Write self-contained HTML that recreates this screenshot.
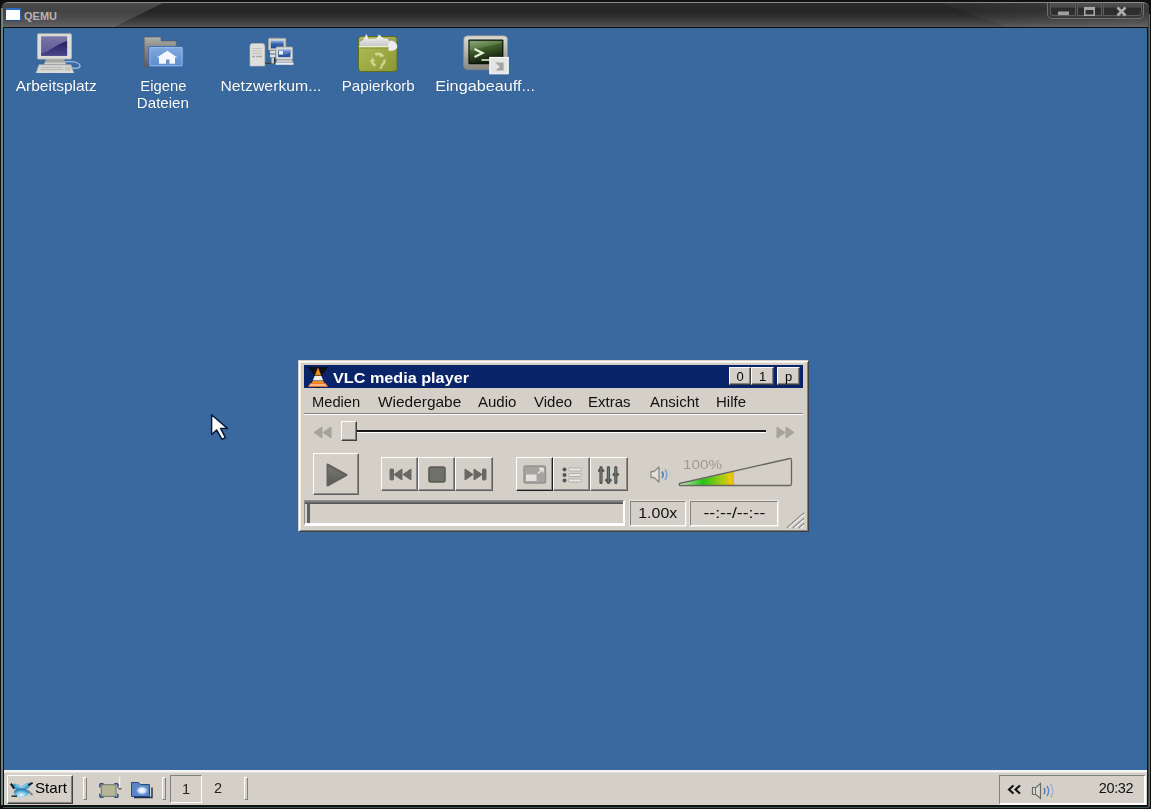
<!DOCTYPE html>
<html>
<head>
<meta charset="utf-8">
<title>QEMU</title>
<style>
*{box-sizing:border-box;margin:0;padding:0}
html,body{width:1151px;height:809px;overflow:hidden;background:#0b0b0b;font-family:"Liberation Sans",sans-serif}
#frame{position:absolute;left:0;top:0;width:1151px;height:809px;background:#101010}
#tbar{position:absolute;left:2px;top:2px;width:1147px;height:25px;border-top:1px solid #8c8c8c;border-radius:6px 6px 0 0;overflow:hidden;
 background:linear-gradient(to bottom,#2a2a2a 0%,#242424 30%,#2e2e2e 55%,#444 85%,#555 100%)}
#tshine{position:absolute;left:0;top:0;width:175px;height:24px;background:linear-gradient(to bottom,rgba(255,255,255,.16),rgba(255,255,255,.10));clip-path:polygon(0 0,92% 0,64% 100%,0 100%)}
#tshine2{position:absolute;right:0;top:0;width:260px;height:24px;background:linear-gradient(to left,rgba(255,255,255,.10),rgba(255,255,255,0));clip-path:polygon(20% 0,100% 0,100% 100%,45% 100%)}
#ticon{position:absolute;left:4px;top:5px;width:15px;height:13px;background:#fff;border-top:2px solid #2a6cc4;border-bottom:1px solid #1f4a8a;border-right:1px solid #345f9a}
#ttext{position:absolute;left:22px;top:6px;font-size:11px;font-weight:bold;color:#b4b4b4;line-height:14px}
#wbtns{position:absolute;left:1045px;top:-1px;width:97px;height:17px;border:1px solid #707070;border-top:none;border-radius:0 0 5px 5px;background:#3a3a3a}
#wbtns b{position:absolute;top:0px;height:14px;border:1px solid #5c5c5c;border-top:none;background:linear-gradient(to bottom,#505050 0%,#484848 42%,#2c2c2c 43%,#303030 100%)}
#wbtns svg{position:absolute;left:0;top:-1px}
#lline{position:absolute;left:1px;top:8px;width:2px;height:797px;background:#6f8580}
#rline{position:absolute;left:1148px;top:14px;width:2px;height:793px;background:linear-gradient(to right,#333,#6a7876)}
#bline{position:absolute;left:3px;top:807px;width:1146px;height:1px;background:#3c5654}
#desk{position:absolute;left:4px;top:28px;width:1143px;height:742px;background:#39699f}
.dico{position:absolute;top:33px;width:108px;text-align:center;color:#fff;font-size:14.5px;line-height:17px}
.dico .lbl{position:absolute;left:0;width:108px;top:44px;text-shadow:0 0 1px rgba(0,0,0,0.3)}
#task{position:absolute;left:4px;top:770px;width:1143px;height:35px;background:#d4d0c8;border-top:2px solid #f6f6f4;box-shadow:inset 0 1px 0 #e4e2dc}

.t{display:inline-block;white-space:nowrap;transform-origin:50% 50%}
.ic{position:absolute}
.lb{position:absolute;color:#fff;font-size:15px;line-height:17px;text-align:center;width:140px;white-space:nowrap;text-shadow:0 0 1px rgba(20,40,80,.55)}
.raised{border:1px solid;border-color:#fff #404040 #404040 #fff;box-shadow:inset -1px -1px 0 #808080,inset 1px 1px 0 #d4d0c8}
.sunk{border:1px solid;border-color:#808080 #fff #fff #808080}
.hdl{position:absolute;top:5px;width:4px;height:23px;border:1px solid;border-color:#fff #808080 #808080 #fff}

#vlc{position:absolute;left:298px;top:360px;width:511px;height:172px;background:#d4d0c8;border:1px solid;border-color:#d4d0c8 #404040 #404040 #d4d0c8;box-shadow:inset 1px 1px 0 #fff,inset -1px -1px 0 #808080,inset 2px 2px 0 #ecebe6}
#vlc>*{position:absolute}
#vt{left:5px;top:4px;width:499px;height:23px;background:#0a246a}
#vt .ttl{position:absolute;left:29px;top:3px;color:#fff;font-weight:bold;font-size:15px;line-height:19px}
.tb{position:absolute;top:2px;height:18px;background:#d4d0c8;border:1px solid;border-color:#fff #404040 #404040 #fff;box-shadow:inset -1px -1px 0 #808080;font-size:13px;line-height:17px;text-align:center;color:#000}
.mi{position:absolute;top:32px;font-size:15px;line-height:18px;color:#111}
.vb{position:absolute;top:96px;height:34px;border:1px solid;border-color:#fff #606060 #606060 #fff;box-shadow:inset -1px -1px 0 #8c8c88}
.vb svg{position:absolute}
.sf{position:absolute;top:139px;height:26px;border:1px solid;border-color:#8e8e8e #fff #fff #8e8e8e;border-bottom-width:3px;border-right-width:2px}
.sf::after{content:"";position:absolute;left:0;top:0;bottom:0;width:5px;background:linear-gradient(to right,#d8d6d0 0,#d8d6d0 2px,#606060 2px,#606060 100%)}
.sf::before{content:"";position:absolute;left:0;top:0;right:0;height:3px;background:linear-gradient(#8a8a8a,#4c4c4c);z-index:1}
.sf2{position:absolute;top:140px;height:25px;border:1px solid;border-color:#808080 #fff #fff #808080;box-shadow:0 0 0 1px #e6e4de;font-size:14.500px;line-height:22px;text-align:center;color:#111}
#desk .ic,#desk .lb,#vlc,#task{filter:blur(.45px)}
</style>
</head>
<body>
<div id="frame">
 <div id="tbar">
  <div id="tshine"></div>
  <div id="ticon"></div>
  <div id="ttext">QEMU</div>
  <div id="tshine2"></div><div id="wbtns"><b style="left:2px;width:26px;border-radius:0 0 0 4px"></b><b style="left:29px;width:25px"></b><b style="left:55px;width:39px;border-radius:0 0 4px 0"></b>
   <svg width="97" height="18" viewBox="0 0 97 18"><path d="M10 10.500h11v3.500h-11z" fill="#a0a0a0"/><path d="M36.800 6.800h9.400v7.400h-9.400z" fill="none" stroke="#a8a8a8" stroke-width="1.600"/><path d="M36 6h11v3h-11z" fill="#a8a8a8"/><path d="M69.500 6.500l8 8m0-8l-8 8" stroke="#adadad" stroke-width="2.600"/></svg></div>
 </div>
 <div id="lline"></div><div id="rline"></div><div id="bline"></div>
 <div id="desk">
 <!-- coordinates inside desk are page coords minus (4,28) -->
 <svg class="ic" style="left:31px;top:4px" width="48" height="44" viewBox="0 0 48 44">
  <defs><linearGradient id="scr" x1="0" y1="0" x2="0" y2="1"><stop offset="0" stop-color="#7a76a8"/><stop offset="1" stop-color="#5a5690"/></linearGradient>
  <linearGradient id="scr2" x1="0" y1="0" x2="0" y2="1"><stop offset="0" stop-color="#262260"/><stop offset="1" stop-color="#48448a"/></linearGradient></defs>
  <path d="M29 30c6-1.500 15 0 16 3.500 0 3-4 3.200-8 2.500" fill="none" stroke="#8fb6e2" stroke-width="1.500"/>
  <path d="M11 27h18l2 5H9z" fill="#a8a8a2"/><path d="M10 30.500h20l1 2H9z" fill="#d0d0ca"/>
  <rect x="2.500" y="1.700" width="34" height="25.400" rx="1" fill="#dcdcd8" stroke="#b4b4b0" stroke-width=".8"/>
  <rect x="6.100" y="4.300" width="26" height="19.500" fill="url(#scr)"/>
  <path d="M6.100 21.500c9-1.500 14-9 26-12.500v14.800h-26z" fill="url(#scr2)"/>
  <path d="M4 32.800h32l2.600 7.800H1.200z" fill="#d6d6d2" stroke="#a8a8a4" stroke-width=".7"/>
  <path d="M6 35.500h22M5 37.500h24" stroke="#b4b4b0" stroke-width=".9"/><path d="M30 34.500h5l1 4h-6z" fill="#c4c4c0"/>
  <path d="M1.500 40.300h37" stroke="#f0f0ee" stroke-width=".9"/>
 </svg>
 <div class="lb" style="left:-18px;top:49px"><span class="t" style="transform:scaleX(1.033)">Arbeitsplatz</span></div>

 <svg class="ic" style="left:139px;top:7px" width="42" height="34" viewBox="0 0 42 34">
  <defs><linearGradient id="fb" x1="0" y1="0" x2="0" y2="1"><stop offset="0" stop-color="#82aae0"/><stop offset="1" stop-color="#5a8acc"/></linearGradient>
  <linearGradient id="fbk" x1="0" y1="0" x2="0" y2="1"><stop offset="0" stop-color="#b0b0ac"/><stop offset=".35" stop-color="#8a8a88"/><stop offset="1" stop-color="#5c5e62"/></linearGradient></defs>
  <path d="M1.200 2.800q0-.8.800-.8h15.200q.8 0 .8.800V6h14.500q.8 0 .8.800V14H7v18H1.200z" fill="url(#fbk)" stroke="#585a60" stroke-width=".6"/>
  <rect x="5.800" y="11.500" width="34.300" height="20.500" rx="1.200" fill="url(#fb)" stroke="#3a68b0" stroke-width=".9"/>
  <rect x="7" y="12.700" width="32" height="18" rx=".6" fill="none" stroke="#a8c8f0" stroke-width=".8" opacity=".8"/>
  <path d="M24.400 15.700L13.800 22.600h2.200v6.200h7v-4.300h3.500v4.300H32v-6.200h2.400z" fill="#f4f8fe"/>
 </svg>
 <div class="lb" style="left:89px;top:49px"><span class="t" style="transform:scaleX(.985)">Eigene</span><br><span class="t" style="transform:scaleX(1.005)">Dateien</span></div>

 <svg class="ic" style="left:244px;top:8px" width="48" height="34" viewBox="0 0 48 34">
  <defs><linearGradient id="ns" x1="0" y1="0" x2="0" y2="1"><stop offset="0" stop-color="#9ab8e0"/><stop offset=".4" stop-color="#3a64ac"/><stop offset="1" stop-color="#244a94"/></linearGradient></defs>
  <path d="M16 27.200h13" stroke="#3c3c3c" stroke-width="1.400"/>
  <path d="M2 10q0-2.500 2.500-2.500h10q2.300 0 2.300 2.500v20H2z" fill="#dededa" stroke="#c0c0bc" stroke-width=".6"/>
  <path d="M4.500 12.500h9.500M4.500 15h9.500M4.500 17.500h9.500" stroke="#bcbcb8" stroke-width=".9"/><path d="M4 20.500h3M8 20.500h6" stroke="#a8a8a4" stroke-width="1.600"/>
  <rect x="20.500" y="2.300" width="17.300" height="12" rx="1.200" fill="#d2d2ce" stroke="#a0a09c" stroke-width=".8"/>
  <rect x="22.800" y="4.600" width="12.800" height="7.800" fill="url(#ns)"/>
  <path d="M22 15h5.500v2.600H22zM22 18.600h5.500v2.600H22z" fill="#e0e0dc"/><path d="M23.500 21.500h2.500v6h-2.500z" fill="#c8c8c4"/><path d="M26 21.500h1.300v6H26z" fill="#303030"/>
  <rect x="28" y="11" width="16.600" height="12.600" rx="1.200" fill="#dcdcd8" stroke="#a6a6a2" stroke-width=".8"/>
  <rect x="30.200" y="13.200" width="12.200" height="8" fill="#2c54a0"/>
  <path d="M30.200 13.200h12.200v1.500h-12.200z" fill="#b8cce8"/><rect x="31" y="15" width="4.200" height="3.600" fill="#e8f0fc"/><path d="M36 15h6.400v2l-6.400 1.500z" fill="#5a84c8"/>
  <path d="M29 24h15l1.200 2.500H27.800z" fill="#c8c8c4"/><path d="M27.500 26.600h18v2.200h-18z" fill="#ececea"/>
 </svg>
 <div class="lb" style="left:197px;top:49px"><span class="t" style="transform:scaleX(1.054)">Netzwerkum...</span></div>

 <svg class="ic" style="left:353px;top:5px" width="42" height="40" viewBox="0 0 42 40">
  <defs><linearGradient id="tg" x1="0" y1="0" x2="1" y2="1"><stop offset="0" stop-color="#b4c058"/><stop offset="1" stop-color="#8a9634"/></linearGradient>
  <linearGradient id="pp" x1="0" y1="0" x2="0" y2="1"><stop offset="0" stop-color="#fafafa"/><stop offset="1" stop-color="#c4c4c4"/></linearGradient></defs>
  <rect x="1.500" y="3.500" width="38.500" height="35" rx="3" fill="url(#tg)" stroke="#5e6e22" stroke-width="1"/>
  <path d="M2.500 6h36v7h-36z" fill="#929090" opacity=".55"/>
  <path d="M2.500 13V9l3.500-2 3.500-6 2 5 8-.5 2.500-4 4 3.500 5 1 2 3v5z" fill="url(#pp)"/>
  <path d="M31 13q0-4 2.500-5.500 5.500.5 6.800 5.500 0 3.500-4 4.500l-3.800.5-1.500-2z" fill="#ececf0"/>
  <path d="M1.800 13.700h30.500" stroke="#eef0d4" stroke-width="1.500"/>
  <path d="M2 15h30" stroke="#7e8a2c" stroke-width=".8"/>
  <g fill="none" stroke="#d2dc98" stroke-width="2.600" opacity=".9"><path d="M18.200 21.500q3.400-1.600 6.500.6"/><path d="M27.500 26.500q.4 3.800-3.200 5.800"/><path d="M18.500 32.600q-3.500-1.400-3.800-5.400"/></g>
  <path d="M24 19.500l3.500 3.800-4.800 1zM22 34.800l4-3.400-1.200 4.800zM13.500 29l1.800-4.800 2.800 3.800z" fill="#d2dc98" opacity=".9"/>
 </svg>
 <div class="lb" style="left:304px;top:49px"><span class="t" style="transform:scaleX(1.006)">Papierkorb</span></div>

 <svg class="ic" style="left:458px;top:7px" width="48" height="40" viewBox="0 0 48 40">
  <defs><linearGradient id="tm" x1="0" y1="0" x2=".35" y2="1"><stop offset="0" stop-color="#8aa878"/><stop offset=".38" stop-color="#5c7c48"/><stop offset=".4" stop-color="#44642e"/><stop offset="1" stop-color="#141c0c"/></linearGradient>
  <linearGradient id="bz" x1="0" y1="0" x2="0" y2="1"><stop offset="0" stop-color="#dcdcd4"/><stop offset=".5" stop-color="#b4b4ac"/><stop offset="1" stop-color="#86867e"/></linearGradient></defs>
  <rect x="1.700" y=".8" width="43.800" height="33.600" rx="4" fill="url(#bz)" stroke="#8e8e86" stroke-width=".8"/>
  <rect x="6.400" y="4.600" width="35" height="24.600" rx="1" fill="#0c1206"/>
  <rect x="7.600" y="5.800" width="32.600" height="22.200" fill="url(#tm)"/>
  <path d="M12.500 14l8 4-8 4" fill="none" stroke="#e4f4dc" stroke-width="2.200"/>
  <path d="M19.500 25h8" stroke="#c8dcc0" stroke-width="1.800"/>
  <rect x="27.800" y="22.500" width="18.400" height="16.200" fill="#e4e4e4" stroke="#f8f8f8" stroke-width="1.200"/>
  <path d="M33 27.500l5 4.200-4.600 3.800h8.200v-8z" fill="#a4a4a4"/>
 </svg>
 <div class="lb" style="left:411px;top:49px"><span class="t" style="transform:scaleX(1.083)">Eingabeauff...</span></div>

 <svg class="ic" style="left:206px;top:385px" width="20" height="28" viewBox="0 0 20 28">
  <path d="M1.600 1.800V21.600L6.600 17l5.400 9.300 3.400-1.600L10.600 15.400H17.400z" fill="#fff" stroke="#0a1c3c" stroke-width="1.500" stroke-linejoin="round"/>
 </svg>
</div>
<div id="vlc">
  <div id="vt">
   <svg style="position:absolute;left:2px;top:1px" width="24" height="22" viewBox="0 0 24 22">
    <path d="M2 1h20l-7 10h-6z" fill="#101010"/>
    <path d="M12 1.500l-3.200 8h6.400z" fill="#f08a1c"/>
    <path d="M8.600 10l-1.800 4.500h10.400l-1.800-4.500z" fill="#f4f0ea"/>
    <path d="M6.600 15l-1.400 3h13.600l-1.400-3z" fill="#f08a1c"/>
    <path d="M2.500 20.500l2-3h15l2 3z" fill="#f6b488" stroke="#e8742a" stroke-width=".8"/>
    <path d="M10 21h4v1h-4z" fill="#101010"/>
   </svg>
   <div class="ttl"><span class="t" style="transform:scaleX(1.08);transform-origin:0 50%">VLC media player</span></div>
   <div class="tb" style="left:425px;width:22px">0</div>
   <div class="tb" style="left:447px;width:23px">1</div>
   <div class="tb" style="left:473px;width:23px">p</div>
  </div>
  <div class="mi" style="left:13px"><span class="t" style="transform:scaleX(.98);transform-origin:0 50%">Medien</span></div>
  <div class="mi" style="left:79px"><span class="t" style="transform:scaleX(1.03);transform-origin:0 50%">Wiedergabe</span></div>
  <div class="mi" style="left:179px">Audio</div>
  <div class="mi" style="left:235px">Video</div>
  <div class="mi" style="left:289px">Extras</div>
  <div class="mi" style="left:351px">Ansicht</div>
  <div class="mi" style="left:417px">Hilfe</div>
  <div style="left:5px;top:52px;width:499px;height:2px;border-top:1px solid #808080;border-bottom:1px solid #fff"></div>
  <!-- seek -->
  <svg style="left:14px;top:65px" width="20" height="13" viewBox="0 0 20 13"><path d="M9 1v11l-8-5.500zM18 1v11l-8-5.500z" fill="#a4a39c" stroke="#a4a39c" stroke-linejoin="round"/></svg>
  <div style="left:58px;top:69px;width:409px;height:3px;border-top:2px solid #181818;border-bottom:1px solid #fff"></div>
  <div style="left:42px;top:60px;width:16px;height:20px;background:#d4d0c8;border:1px solid;border-color:#fff #404040 #404040 #fff;box-shadow:inset -1px -1px 0 #808080"></div>
  <svg style="left:476px;top:65px" width="20" height="13" viewBox="0 0 20 13"><path d="M2 1v11l8-5.500zM11 1v11l8-5.500z" fill="#a4a39c" stroke="#a4a39c" stroke-linejoin="round"/></svg>
  <!-- buttons -->
  <div class="vb" style="left:14px;top:92px;width:46px;height:42px">
   <svg style="left:11px;top:8px" width="24" height="26" viewBox="0 0 24 26"><defs><linearGradient id="pg" x1="0" y1="0" x2="0" y2="1"><stop offset="0" stop-color="#7c7c76"/><stop offset="1" stop-color="#585852"/></linearGradient></defs><path d="M2.500 2.500v21l19-10.500z" fill="url(#pg)" stroke="#62625c" stroke-width="2" stroke-linejoin="round"/></svg>
  </div>
  <div class="vb" style="left:82px;width:37px">
   <svg style="left:7px;top:10px" width="24" height="13" viewBox="0 0 24 13"><g fill="#686862" stroke="#686862" stroke-linejoin="round"><rect x="1" y="1" width="3.500" height="11" rx="1"/><path d="M13 1v11l-8-5.500zM22 1v11l-8-5.500z"/></g></svg>
  </div>
  <div class="vb" style="left:119px;width:37px">
   <svg style="left:9px;top:8px" width="18" height="17" viewBox="0 0 18 17"><rect x="1" y="1" width="16" height="15" rx="2" fill="#70706a" stroke="#5a5a54" stroke-width="1.600"/></svg>
  </div>
  <div class="vb" style="left:156px;width:38px">
   <svg style="left:7px;top:10px" width="24" height="13" viewBox="0 0 24 13"><g fill="#686862" stroke="#686862" stroke-linejoin="round"><path d="M2 1v11l8-5.500zM11 1v11l8-5.500z"/><rect x="19.500" y="1" width="3.500" height="11" rx="1"/></g></svg>
  </div>
  <div class="vb" style="left:217px;width:37px;border-color:#fff #202020 #202020 #fff">
   <svg style="left:6px;top:7px" width="24" height="19" viewBox="0 0 24 19"><rect x="1" y="1" width="21.500" height="17" rx="1.500" fill="#a6a4a0" stroke="#94928e" stroke-width="1.400"/><rect x="3" y="9.500" width="10.500" height="6.500" fill="#e4e2dc"/><path d="M15 8.500l5-5m0 4v-4h-4" stroke="#ecebe6" stroke-width="1.400" fill="none"/></svg>
  </div>
  <div class="vb" style="left:254px;width:37px">
   <svg style="left:8px;top:9px" width="22" height="16" viewBox="0 0 22 16"><g fill="#505a58"><circle cx="2.500" cy="2.500" r="2"/><circle cx="2.500" cy="8" r="2"/><circle cx="2.500" cy="13.500" r="2"/></g><g fill="#e8e6e0" stroke="#a4a29c" stroke-width=".8"><rect x="6.500" y="1" width="13" height="3" rx="1.300"/><rect x="6.500" y="6.500" width="13" height="3" rx="1.300"/><rect x="6.500" y="12" width="13" height="3" rx="1.300"/></g></svg>
  </div>
  <div class="vb" style="left:291px;width:38px">
   <svg style="left:7px;top:7px" width="24" height="20" viewBox="0 0 24 20"><g stroke="#505654" stroke-width="3.200" stroke-linecap="round"><path d="M3 2.500v15M10.400 2.500v15M17.800 2.500v15"/></g><g fill="#505654"><path d="M-.8 6l2-2.600h3.600l2 2.600-2 1.200h-3.600zM6.600 15l2 2.400h3.600l2-2.400-2-1.600h-3.600zM14 9.500l2-1.800h3.600l2 1.800-2 1.800h-3.600z"/></g><g stroke="#8a908c" stroke-width=".7"><path d="M3 3v14M10.400 3v14M17.800 3v14"/></g></svg>
  </div>
  <!-- volume -->
  <svg style="left:350px;top:104px" width="24" height="20" viewBox="0 0 24 20">
   <path d="M2 6.500h3l5-4.500v15l-5-4.500h-3z" fill="#e4e2dc" stroke="#8a8a84" stroke-width="1.300" stroke-linejoin="round"/>
   <path d="M13 6.500c1.400 2 1.400 4.500 0 6.500" fill="none" stroke="#4a78b4" stroke-width="1.500"/>
   <path d="M16 4.500c2.400 3 2.400 7.500 0 10.500" fill="none" stroke="#7aa0d0" stroke-width="1.500"/>
   <path d="M19 3c3 4 3 10 0 14" fill="none" stroke="#c4ccd4" stroke-width="1.200"/>
  </svg>
  <div style="left:384px;top:98px;font-size:12.500px;line-height:13px;color:#9c9a94"><span class="t" style="transform:scaleX(1.22);transform-origin:0 50%">100%</span></div>
  <svg style="left:376px;top:94px" width="122" height="36" viewBox="0 0 122 36">
   <defs><linearGradient id="vg" x1="0" y1="0" x2="1" y2="0"><stop offset="0" stop-color="#e8f4e0"/><stop offset=".18" stop-color="#7fd870"/><stop offset=".42" stop-color="#22c41c"/><stop offset=".75" stop-color="#9ccc14"/><stop offset=".93" stop-color="#e8c80c"/><stop offset="1" stop-color="#f0b808"/></linearGradient></defs>
   <path d="M5 29L59 16.500V30H5z" fill="url(#vg)"/>
   <path d="M4.500 28.500L115 3.500q1.500-.3 1.500 1.200V29q0 1.500-1.500 1.500H5.500q-2-.3-1-2z" fill="none" stroke="#66665e" stroke-width="1.300"/>
  </svg>
  <!-- status -->
  <div class="sf" style="left:5px;width:321px"></div>
  <div class="sf2" style="left:331px;width:56px"><span class="t" style="transform:scaleX(1.1)">1.00x</span></div>
  <div class="sf2" style="left:391px;width:88px"><span class="t" style="transform:scaleX(1.22)">--:--/--:--</span></div>
  <svg style="left:486px;top:150px" width="20" height="18" viewBox="0 0 20 18"><g stroke-width="1.400"><path d="M2 17L19 2M8 17L19 7.500M14 17L19 12.500" stroke="#808080"/><path d="M3.500 17L19 3.400M9.500 17L19 8.900M15.500 17L19 13.900" stroke="#fff" opacity=".7"/></g></svg>
 </div>
 <div id="task">
  <div class="raised" style="position:absolute;left:3px;top:3px;width:66px;height:29px"></div>
  <svg style="position:absolute;left:6px;top:10px" width="24" height="16" viewBox="0 0 24 16">
   <defs><radialGradient id="sg" cx=".5" cy=".75" r=".6"><stop offset="0" stop-color="#e8fbff"/><stop offset=".6" stop-color="#6fc0e4"/><stop offset="1" stop-color="#2f7fb4"/></radialGradient></defs>
   <path d="M1 2.500c4-1.500 8-.5 10.500 3 2.500-4 6.500-5.500 10.500-4.500-1 3.500-4.500 6.500-9 8h-4c-4-1-7-3.500-8-6.500z" fill="#4a9cc8"/>
   <path d="M5 1.800c3-.3 5.500 1.200 6.500 3.200 1.500-2.500 4-3.800 7-3.800-2 3-4 4.500-7 6.500-3-1.500-5-3-6.500-5.900z" fill="#7cc4e4"/>
   <path d="M.8 1.600l3.400 5M22.600.8l-4.200 2.400" stroke="#0c1418" stroke-width="1.900"/>
   <ellipse cx="11.200" cy="10.800" rx="7.400" ry="4.600" fill="url(#sg)"/>
   <path d="M1.500 14.200h5.500" stroke="#222" stroke-width="1.400"/><path d="M17.500 8.500l5 4.500" stroke="#6a86a4" stroke-width="1.800"/>
  </svg>
  <div style="position:absolute;left:31px;top:7px;font-size:15px;line-height:18px;color:#000"><span class="t" style="transform:scaleX(1.01);transform-origin:0 50%">Start</span></div>
  <div class="hdl" style="left:79px"></div>
  <svg style="position:absolute;left:94.500px;top:10px;overflow:visible" width="23.400" height="16.200" viewBox="0 0 26 18">
   <rect x="2.500" y="3" width="16.500" height="13" rx="2" fill="#b4b496" stroke="#6a6c5c"/>
   <path d="M1 2h4M1 2v4M21 2h-4M21 2v4M1 17h4M1 17v-4M21 17h-4M21 17v-4" stroke="#284a80" stroke-width="1.600" fill="none"/>
   <path d="M21.500 7.500h3.500" stroke="#444" stroke-width="1.400"/><path d="M23 -6v12" stroke="#f4f4f2" stroke-width="1.200"/>
  </svg>
  <svg style="position:absolute;left:126px;top:8px" width="24" height="19" viewBox="0 0 24 19">
   <defs><radialGradient id="fg2" cx=".5" cy=".5" r=".5"><stop offset="0" stop-color="#fff"/><stop offset=".5" stop-color="#d6e8fa"/><stop offset="1" stop-color="#5a8cd0"/></radialGradient></defs>
   <path d="M1.500 2.500h7l2 2h9v12h-18z" fill="#5a86c8" stroke="#2a4a80"/>
   <path d="M4 17.500h18v-10" fill="none" stroke="#1c2c4c" stroke-width="1.400"/>
   <ellipse cx="12" cy="10.500" rx="6" ry="4.500" fill="url(#fg2)"/>
  </svg>
  <div class="hdl" style="left:158px"></div>
  <div class="sunk" style="position:absolute;left:166px;top:3px;width:32px;height:28px"></div>
  <div style="position:absolute;left:166px;top:9px;width:32px;text-align:center;font-size:14.500px;line-height:16px;color:#222">1</div>
  <div style="position:absolute;left:198px;top:8px;width:32px;text-align:center;font-size:14.500px;line-height:16px;color:#222">2</div>
  <div class="hdl" style="left:240px"></div>
  <div class="sunk" style="position:absolute;left:995px;top:3px;width:147px;height:30px;border-right-width:2px;border-bottom-width:2px"></div>
  <svg style="position:absolute;left:1003px;top:12px" width="16" height="11" viewBox="0 0 16 12" preserveAspectRatio="none"><path d="M6.500 1.500L2 6l4.500 4.500M13 1.500L8.500 6l4.500 4.500" fill="none" stroke="#101010" stroke-width="2.200"/></svg>
  <svg style="position:absolute;left:1027px;top:9px" width="26" height="20" viewBox="0 0 26 20">
   <path d="M1.500 6.500h3.500l4.500-4v15l-4.500-4h-3.500z" fill="#d8d8d4" stroke="#6a6a66" stroke-width="1.200"/>
   <path d="M4.500 6.500v7" stroke="#6a6a66"/>
   <path d="M13 7c1.200 2 1.200 4 0 6" fill="none" stroke="#4a7ab8" stroke-width="1.400"/>
   <path d="M16 5c2 3 2 7 0 10" fill="none" stroke="#5a8ac8" stroke-width="1.400"/>
   <path d="M19.500 3c3 4 3 10 0 14" fill="none" stroke="#7aa0d0" stroke-width="1.200" stroke-dasharray="2 1"/>
  </svg>
  <div style="position:absolute;left:1088px;top:8px;width:48px;text-align:center;font-size:14.500px;line-height:17px;color:#111;letter-spacing:-.4px">20:32</div>
 </div>
</div>
</body>
</html>
